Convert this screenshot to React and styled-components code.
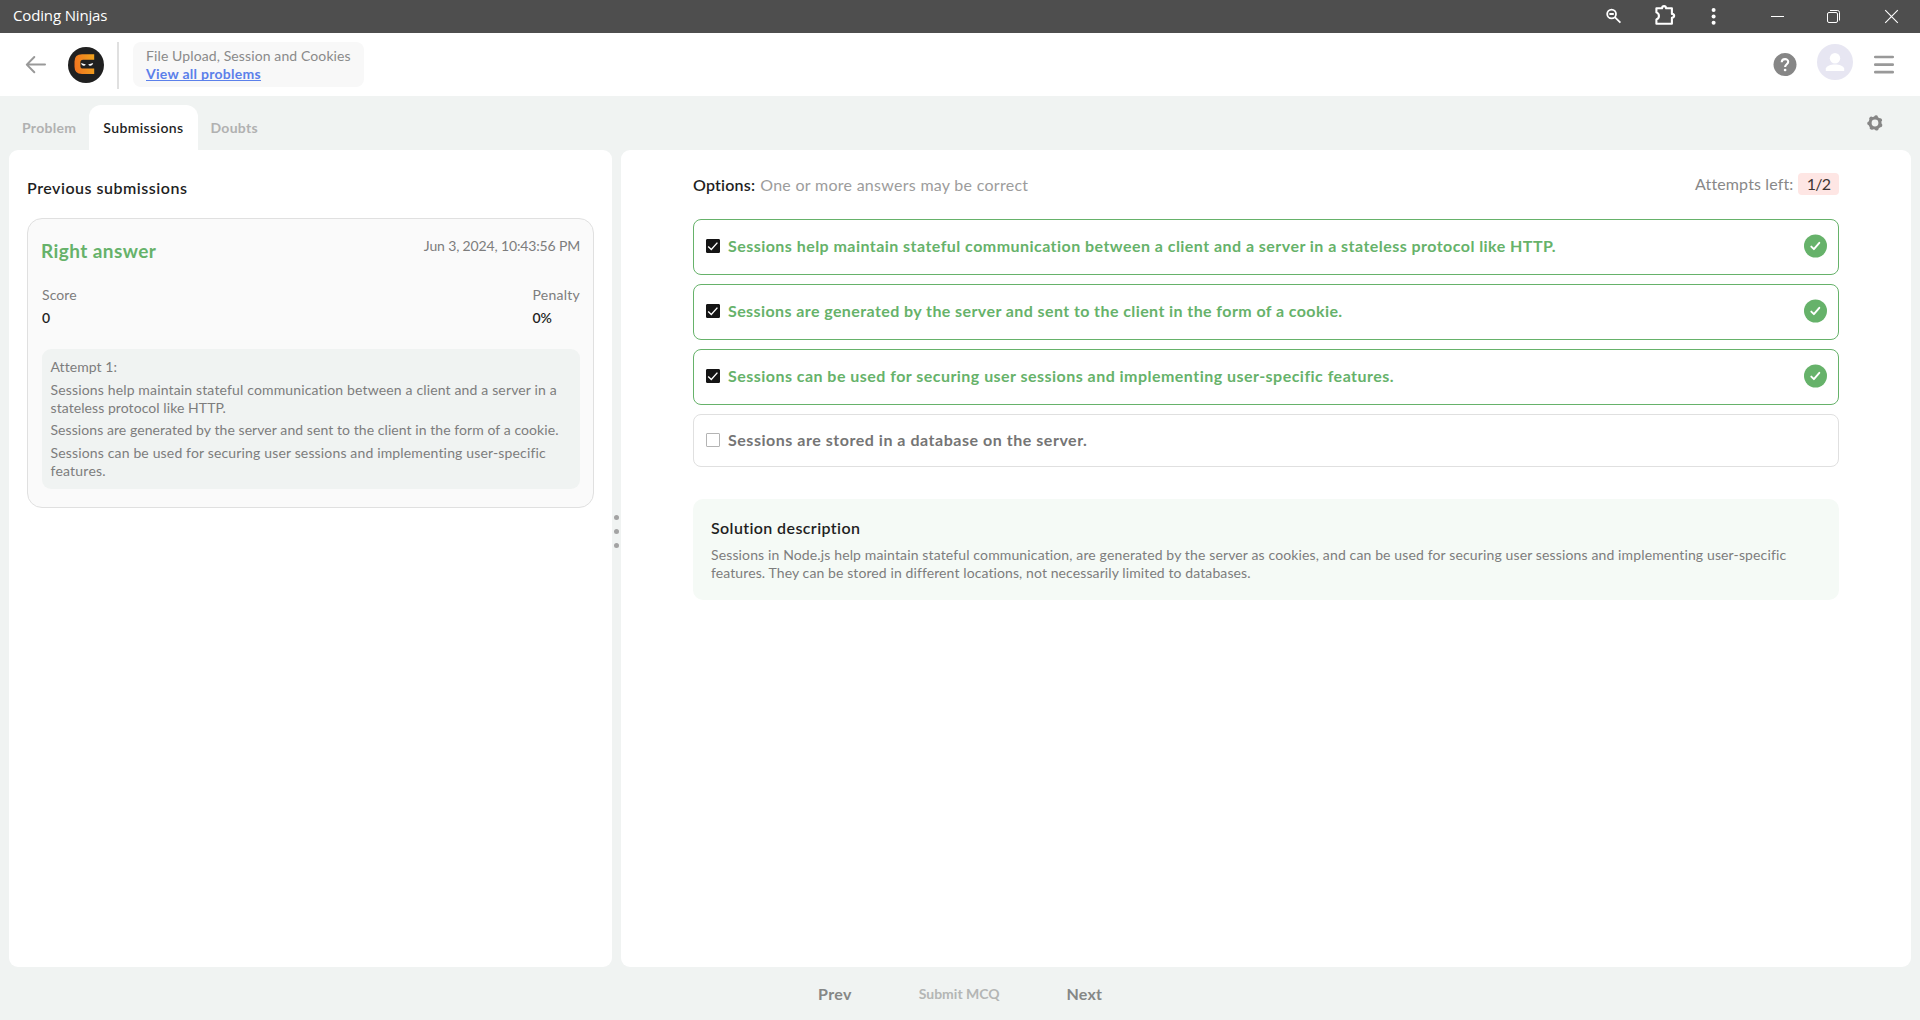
import React from "react";
import styled, { createGlobalStyle } from "styled-components";

const green = "#66b26a";

const GlobalStyle = createGlobalStyle`
  *, *::before, *::after { box-sizing: border-box; }
  body {
    margin: 0;
    background: #f0f3f2;
    font-family: Lato, "Open Sans", sans-serif;
    font-size: 14px;
    line-height: 18px;
    color: #7d7d7d;
    overflow: hidden;
  }
  svg { display: block; flex: none; }
`;

const Page = styled.div`
  display: flex;
  flex-direction: column;
  height: 1020px;
`;

const Text = styled.span`
  display: block;
  white-space: nowrap;
  letter-spacing: ${(p) => p.$track || 0}px;
`;

/* Window title bar */
const TitleBar = styled.div`
  display: flex;
  align-items: center;
  flex: none;
  height: 33px;
  padding: 0 16px 0 13px;
  background: #4e4e4e;
  color: #fff;
`;

const WindowTitle = styled(Text)`
  margin: 0 auto 3px 0;
  font-family: "Open Sans", "Noto Sans", sans-serif;
  font-size: 15px;
  line-height: 20px;
`;

const WindowIcon = styled.svg.attrs({ width: 24, height: 33, viewBox: "0 0 24 33", fill: "none", stroke: "#fff" })`
  margin-left: ${(p) => p.$gap}px;
`;

/* Application header */
const Header = styled.header`
  display: flex;
  align-items: center;
  flex: none;
  height: 63px;
  padding: 0 24px;
  background: #fff;
`;

const Logo = styled.svg`
  margin-left: 20px;
`;

const Divider = styled.div`
  width: 2px;
  height: 47px;
  margin: 2px 14px 0 13px;
  background: #e0e0e0;
`;

const Breadcrumb = styled.div`
  width: 231px;
  height: 45px;
  padding: 5px 13px;
  border-radius: 8px;
  background: #f8f8f8;
  color: #8a8a8a;
`;

const ProblemsLink = styled(Text)`
  width: max-content;
  font-weight: 700;
  color: #5b80ea;
  text-decoration: underline;
  text-decoration-thickness: 1px;
  text-underline-offset: 1px;
  text-decoration-skip-ink: none;
`;

const HeaderActions = styled.div`
  display: flex;
  align-items: center;
  gap: 20px;
  margin-left: auto;
`;

const Avatar = styled.svg`
  margin: 0 -1px 5px 0;
`;

/* Tabs */
const TabBar = styled.nav`
  display: flex;
  align-items: flex-end;
  flex: none;
  height: 54px;
  padding: 0 37px 0 9px;
`;

const Tab = styled.div`
  display: flex;
  align-items: center;
  height: 45px;
  padding: 0 ${(p) => (p.$active ? 14 : 13)}px;
  border-radius: 12px 12px 0 0;
  background: ${(p) => (p.$active ? "#fff" : "transparent")};
  color: ${(p) => (p.$active ? "#1f1f1f" : "#b0b1b1")};
  font-weight: ${(p) => (p.$active ? 600 : 700)};
`;

const SettingsIcon = styled.svg`
  margin: 0 0 19px auto;
`;

/* Panels */
const Workspace = styled.main`
  display: flex;
  height: 817px;
  padding: 0 9px;
`;

const Panel = styled.section`
  width: ${(p) => p.$width}px;
  padding: ${(p) => p.$pad};
  border-radius: 9px;
  background: #fff;
`;

const Splitter = styled.div`
  display: flex;
  flex-direction: column;
  align-items: center;
  justify-content: center;
  gap: 8.6px;
  width: 9px;
  padding-bottom: 54px;
`;

const Dot = styled.i`
  width: 5px;
  height: 5px;
  border-radius: 50%;
  background: #a3a3a3;
`;

const Heading = styled(Text)`
  font-size: 16px;
  font-weight: 600;
  line-height: 20px;
  color: #1f1f1f;
`;

const Card = styled.article`
  height: 290px;
  margin-top: 20px;
  padding: 18px 13px 0 14px;
  border: 1px solid #e0e0e0;
  border-radius: 15px;
  background: #fafafa;
`;

const CardHead = styled.div`
  display: flex;
  align-items: flex-start;
  justify-content: space-between;
`;

const Verdict = styled(Text)`
  margin: 2px 0 0 -1px;
  font-size: 19px;
  font-weight: 700;
  line-height: 24px;
  color: ${green};
`;

const Stats = styled.div`
  display: flex;
  justify-content: space-between;
  margin-top: 23px;
`;

const StatValue = styled(Text)`
  margin-top: 5px;
  font-weight: 600;
  color: #1f1f1f;
`;

const Attempt = styled.div`
  display: flex;
  flex-direction: column;
  gap: 4.6px;
  height: 140px;
  margin-top: 22px;
  padding: 9px 8.5px;
  border-radius: 9px;
  background: #f0f3f2;
`;

/* Options */
const OptionsHead = styled.div`
  display: flex;
  justify-content: space-between;
  height: 24px;
  font-size: 16px;
`;

const Prompt = styled.div`
  display: flex;
  gap: 5px;
  padding-top: 2px;
  line-height: 20px;
  color: #9c9c9c;
`;

const AttemptsLeft = styled.div`
  display: flex;
  gap: 4.5px;
  line-height: 22px;
  color: #888;
`;

const Badge = styled.span`
  display: flex;
  justify-content: center;
  width: 41px;
  height: 22px;
  border-radius: 4px;
  background: #fee6e4;
  color: #3c3433;
`;

const OptionList = styled.div`
  display: flex;
  flex-direction: column;
  gap: 9px;
  margin-top: 22px;
`;

const Option = styled.div`
  display: flex;
  align-items: center;
  gap: 8px;
  height: ${(p) => (p.$correct ? 56 : 53)}px;
  padding: 0 11px ${(p) => (p.$correct ? 2 : 1)}px 12px;
  border: 1px solid ${(p) => (p.$correct ? green : "#e0e0e0")};
  border-radius: 8px;
  font-size: 16px;
  font-weight: 700;
  line-height: 20px;
  color: ${(p) => (p.$correct ? green : "#757575")};
`;

const Box = styled.span`
  display: flex;
  align-items: center;
  justify-content: center;
  width: 14px;
  height: 14px;
  border: 1px solid ${(p) => (p.$checked ? "#141414" : "#b4b4b4")};
  border-radius: 1px;
  background: ${(p) => (p.$checked ? "#141414" : "#fff")};
`;

const CorrectIcon = styled.svg`
  margin-left: auto;
`;

const Solution = styled.div`
  height: 101px;
  margin-top: 32px;
  padding: 19px 18px;
  border-radius: 10px;
  background: #f5faf6;
`;

const SolutionText = styled.div`
  margin-top: 8px;
`;

const Footer = styled.footer`
  display: flex;
  align-items: center;
  height: 53px;
  padding-left: 818px;
  gap: 67px;
`;

const NavButton = styled(Text)`
  font-size: 16px;
  font-weight: 700;
  color: #858786;
`;

const SubmitButton = styled(Text)`
  font-weight: 700;
  color: #b4b6b5;
`;

const options = [
  ["Sessions help maintain stateful communication between a client and a server in a stateless protocol like HTTP.", 0.455, true],
  ["Sessions are generated by the server and sent to the client in the form of a cookie.", 0.412, true],
  ["Sessions can be used for securing user sessions and implementing user-specific features.", 0.465, true],
  ["Sessions are stored in a database on the server.", 0.53, false],
];

const gearTeeth = [0, 1, 2, 3, 4, 5, 6].map((i) => i * (360 / 7) + 10);

function WindowBar() {
  return (
    <TitleBar>
      <WindowTitle $track={-0.15}>Coding Ninjas</WindowTitle>
      <WindowIcon $gap={0} strokeWidth="1.8">
        <circle cx="9.6" cy="14" r="4.4" />
        <path d="M12.8 17.2 L18.4 22.6 M7.4 14 H11.8" />
      </WindowIcon>
      <WindowIcon $gap={27} strokeWidth="2.1" strokeLinejoin="round">
        <path d="M3.4 8.3 H9 C9.3 5.4 12.8 5.4 13.1 8.3 H18.9 V13.9 C21.9 14.2 21.9 17.5 18.9 17.8 V23.8 H3.4 V19.4 C6.8 18 6.8 13.8 3.4 12.4 Z" />
      </WindowIcon>
      <WindowIcon $gap={25}>
        <g fill="#fff" stroke="none">
          <circle cx="11.6" cy="10" r="2" />
          <circle cx="11.6" cy="16.4" r="2" />
          <circle cx="11.6" cy="22.8" r="2" />
        </g>
      </WindowIcon>
      <WindowIcon $gap={40}>
        <path d="M5 16.5 H18" />
      </WindowIcon>
      <WindowIcon $gap={32}>
        <rect x="5.5" y="12.5" width="10" height="10" rx="1.5" />
        <path d="M8 10.5 H15.5 Q17.5 10.5 17.5 12.5 V20.5" />
      </WindowIcon>
      <WindowIcon $gap={34} strokeWidth="1.1">
        <path d="M5.2 10.2 L17.8 22.8 M17.8 10.2 L5.2 22.8" />
      </WindowIcon>
    </TitleBar>
  );
}

function AppHeader() {
  return (
    <Header>
      <svg width="24" height="24" viewBox="0 0 24 24" fill="none" stroke="#999" strokeWidth="2" strokeLinecap="round" strokeLinejoin="round">
        <path d="M21 11.6 H3 M10.3 4 L2.8 11.6 L10.3 19.2" />
      </svg>
      <Logo width="36" height="36" viewBox="0 0 36 36">
        <defs>
          <linearGradient id="flame" x1="0" y1="0.6" x2="1" y2="0.4">
            <stop offset="0" stopColor="#f07420" />
            <stop offset="1" stopColor="#f0a01c" />
          </linearGradient>
        </defs>
        <circle cx="18" cy="18" r="18" fill="#202020" />
        <path d="M26.2 7.2 H14 Q6.5 7.2 6.5 14.5 V19.8 Q6.5 27 14 27 H26.2 V21.6 H15 Q12.4 21.6 12.4 19 V15.4 Q12.4 12.7 15 12.7 H26.2 Z" fill="url(#flame)" />
        <path d="M13 15.9 L17.8 17.4 Q17 18.9 15.6 18.7 Q13.6 18.4 13 15.9 Z M25.2 15.9 L20.2 17.4 Q21 18.9 22.6 18.7 Q24.6 18.4 25.2 15.9 Z" fill="#fff" />
      </Logo>
      <Divider />
      <Breadcrumb>
        <Text $track={0.11}>File Upload, Session and Cookies</Text>
        <ProblemsLink $track={0.28}>View all problems</ProblemsLink>
      </Breadcrumb>
      <HeaderActions>
        <svg width="24" height="24" viewBox="0 0 24 24">
          <circle cx="12" cy="11.6" r="11.5" fill="#868686" />
          <path d="M8.7 9.3 C8.9 5 15.2 5.2 15.2 8.8 C15.2 11.2 12.1 11.3 12.1 14" fill="none" stroke="#fff" strokeWidth="2.1" />
          <circle cx="12.1" cy="17" r="1.35" fill="#fff" />
        </svg>
        <Avatar width="36" height="36" viewBox="0 0 36 36">
          <circle cx="18" cy="18" r="18" fill="#e7e6f2" />
          <circle cx="18" cy="14.2" r="5.2" fill="#fff" />
          <path d="M8.8 27 V24.6 C10 19 26 19 27.2 24.6 V27 Z" fill="#fff" />
        </Avatar>
        <svg width="24" height="24" viewBox="0 0 24 24" stroke="#999" strokeWidth="2.7" strokeLinecap="round">
          <path d="M3.3 4 H20.7 M3.3 11.7 H20.7 M3.3 19.2 H20.7" />
        </svg>
      </HeaderActions>
    </Header>
  );
}

function Tabs() {
  return (
    <TabBar>
      <Tab><Text $track={0.3}>Problem</Text></Tab>
      <Tab $active><Text $track={0.38}>Submissions</Text></Tab>
      <Tab><Text $track={0.28}>Doubts</Text></Tab>
      <SettingsIcon width="16" height="16" viewBox="0 0 16 16">
        <circle cx="8" cy="8" r="5" fill="none" stroke="#868686" strokeWidth="3.2" />
        {gearTeeth.map((angle) => (
          <circle key={angle} cx="8" cy="2.1" r="1.9" fill="#868686" transform={`rotate(${angle} 8 8)`} />
        ))}
      </SettingsIcon>
    </TabBar>
  );
}

function Submissions() {
  return (
    <Panel $width={603} $pad="28px 18px">
      <Heading $track={0.51}>Previous submissions</Heading>
      <Card>
        <CardHead>
          <Verdict $track={0.42}>Right answer</Verdict>
          <Text $track={-0.15}>Jun 3, 2024, 10:43:56 PM</Text>
        </CardHead>
        <Stats>
          <div>
            <Text $track={0.1}>Score</Text>
            <StatValue>0</StatValue>
          </div>
          <div>
            <Text $track={0.25}>Penalty</Text>
            <StatValue>0%</StatValue>
          </div>
        </Stats>
        <Attempt>
          <Text $track={0.05}>Attempt 1:</Text>
          <div>
            <Text $track={0.15}>Sessions help maintain stateful communication between a client and a server in a</Text>
            <Text $track={0.07}>stateless protocol like HTTP.</Text>
          </div>
          <Text $track={0.07}>Sessions are generated by the server and sent to the client in the form of a cookie.</Text>
          <div>
            <Text $track={0.155}>Sessions can be used for securing user sessions and implementing user-specific</Text>
            <Text $track={0.22}>features.</Text>
          </div>
        </Attempt>
      </Card>
    </Panel>
  );
}

function Question() {
  return (
    <Panel $width={1290} $pad="23px 72px">
      <OptionsHead>
        <Prompt>
          <Heading as="b" $track={0.2}>Options:</Heading>
          <Text $track={0.28}>One or more answers may be correct</Text>
        </Prompt>
        <AttemptsLeft>
          <Text $track={0.14}>Attempts left:</Text>
          <Badge><Text $track={-0.8}>1/2</Text></Badge>
        </AttemptsLeft>
      </OptionsHead>
      <OptionList>
        {options.map(([label, track, correct]) => (
          <Option key={label} $correct={correct}>
            <Box $checked={correct}>
              {correct && (
                <svg width="14" height="14" viewBox="0 0 14 14" fill="none" stroke="#fff" strokeWidth="1.4">
                  <path d="M2.2 7.4 L5.3 10.4 L11.4 3.6" />
                </svg>
              )}
            </Box>
            <Text $track={track}>{label}</Text>
            {correct && (
              <CorrectIcon width="24" height="24" viewBox="0 0 24 24">
                <circle cx="12.5" cy="12" r="11.5" fill={green} />
                <path d="M8.3 12.6 L10.9 15.2 L16.3 8.8" fill="none" stroke="#fff" strokeWidth="1.9" strokeLinecap="round" strokeLinejoin="round" />
              </CorrectIcon>
            )}
          </Option>
        ))}
      </OptionList>
      <Solution>
        <Heading $track={0.39}>Solution description</Heading>
        <SolutionText>
          <Text $track={0.134}>
            Sessions in Node.js help maintain stateful communication, are generated by the server as cookies, and can be used for securing user sessions and implementing user-specific
          </Text>
          <Text $track={0.1}>features. They can be stored in different locations, not necessarily limited to databases.</Text>
        </SolutionText>
      </Solution>
    </Panel>
  );
}

export default function App() {
  return (
    <Page>
      <GlobalStyle />
      <WindowBar />
      <AppHeader />
      <Tabs />
      <Workspace>
        <Submissions />
        <Splitter><Dot /><Dot /><Dot /></Splitter>
        <Question />
      </Workspace>
      <Footer>
        <NavButton $track={0.35}>Prev</NavButton>
        <SubmitButton>Submit MCQ</SubmitButton>
        <NavButton $track={0.15}>Next</NavButton>
      </Footer>
    </Page>
  );
}
